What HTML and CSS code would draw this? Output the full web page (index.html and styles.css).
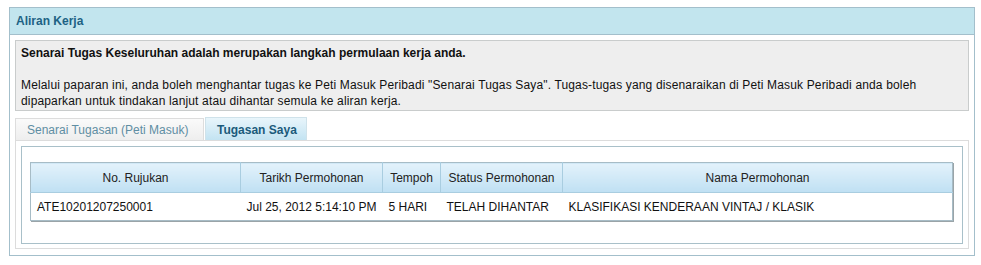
FILE: index.html
```html
<!DOCTYPE html>
<html lang="ms">
  <head>
    <meta charset="UTF-8" />
    <title>Aliran Kerja</title>
    <link rel="stylesheet" href="styles.css">
  </head>
  <body>
    <div class="panel">
      <div class="panel-head">Aliran Kerja</div>
      <div class="panel-body">
        <div class="info-box">
          <p class="info-title">Senarai Tugas Keseluruhan adalah merupakan langkah permulaan kerja anda.</p>
          <p class="info-text">Melalui paparan ini, anda boleh menghantar tugas ke Peti Masuk Peribadi "Senarai Tugas Saya". Tugas-tugas yang disenaraikan di Peti Masuk Peribadi anda boleh dipaparkan untuk tindakan lanjut atau dihantar semula ke aliran kerja.</p>
        </div>
        <div class="tabs">
          <div class="tab">Senarai Tugasan (Peti Masuk)</div>
          <div class="tab tab-active">Tugasan Saya</div>
        </div>
        <div class="tab-panel">
          <div class="list-box">
            <table class="task-table">
              <thead>
                <tr>
                  <th class="col-ref">No. Rujukan</th>
                  <th class="col-date">Tarikh Permohonan</th>
                  <th class="col-days">Tempoh</th>
                  <th class="col-status">Status Permohonan</th>
                  <th>Nama Permohonan</th>
                </tr>
              </thead>
              <tbody>
                <tr>
                  <td>ATE10201207250001</td>
                  <td>Jul 25, 2012 5:14:10 PM</td>
                  <td>5 HARI</td>
                  <td>TELAH DIHANTAR</td>
                  <td>KLASIFIKASI KENDERAAN VINTAJ / KLASIK</td>
                </tr>
              </tbody>
            </table>
          </div>
        </div>
      </div>
    </div>
  </body>
</html>
```

FILE: styles.css
```css
body {
  margin: 0;
  padding: 7px 0 0 9px;
  font-family: "Liberation Sans", Arial, sans-serif;
  font-size: 12px;
  color: #111;
  background: #fff;
}

.panel {
  width: 964px;
  border: 1px solid #a3bfcb;
}

.panel-head {
  height: 26px;
  line-height: 27px;
  padding-left: 6px;
  background: #c2e5ee;
  border-bottom: 1px solid #a3bfcb;
  font-weight: bold;
  color: #1d6284;
}

.panel-body {
  padding: 5px 5px 6px 5px;
}

.info-box {
  height: 65px;
  padding: 4px 5px 0 5px;
  background: #eeeeee;
  border: 1px solid #c9cccc;
  line-height: 16px;
  color: #111;
}

.info-box p {
  margin: 0;
}

.info-box .info-title {
  font-weight: bold;
  margin-bottom: 16px;
}

.info-box .info-text {
  width: 910px;
  letter-spacing: 0.15px;
}

.tabs {
  display: flex;
  align-items: flex-end;
  margin-top: 6px;
  height: 23px;
}

.tab {
  box-sizing: border-box;
  width: 189px;
  height: 22px;
  line-height: 22px;
  padding: 0 11px;
  border: 1px solid #dddddd;
  border-bottom: none;
  background: linear-gradient(#fafafa, #eeeeee);
  color: #5f8ea3;
  white-space: nowrap;
}

.tab-active {
  width: 102px;
  height: 23px;
  line-height: 24px;
  margin-left: 1px;
  text-align: center;
  border-color: #cfe2ea;
  background: linear-gradient(#e8f5fb, #c3e3f2);
  color: #1b5a7b;
  font-weight: bold;
}

.tab-panel {
  padding: 5px;
  border: 1px solid #dcdcdc;
  height: 97px;
}

.list-box {
  height: 81px;
  padding: 15px 8px 0 8px;
  border: 1px solid #a9c0c9;
}

.task-table {
  width: 923px;
  table-layout: fixed;
  border-collapse: collapse;
  border: 1px solid #a7bcc6;
  box-shadow: 1px 1px 0 #9aa4a8;
}

.task-table th {
  height: 29px;
  padding: 0;
  font-weight: normal;
  color: #222;
  background: linear-gradient(#e3f2fb, #bfe0f3);
  border-left: 1px solid #a9cde0;
  border-bottom: 1px solid #a9cde0;
  text-align: center;
  white-space: nowrap;
}

.task-table th:first-child {
  border-left: none;
}

.task-table td {
  height: 27px;
  padding: 0 0 0 6px;
  background: #fff;
  white-space: nowrap;
}

.col-ref {
  width: 209px;
}

.col-date {
  width: 141px;
}

.col-days {
  width: 57px;
}

.col-status {
  width: 121px;
}
```
